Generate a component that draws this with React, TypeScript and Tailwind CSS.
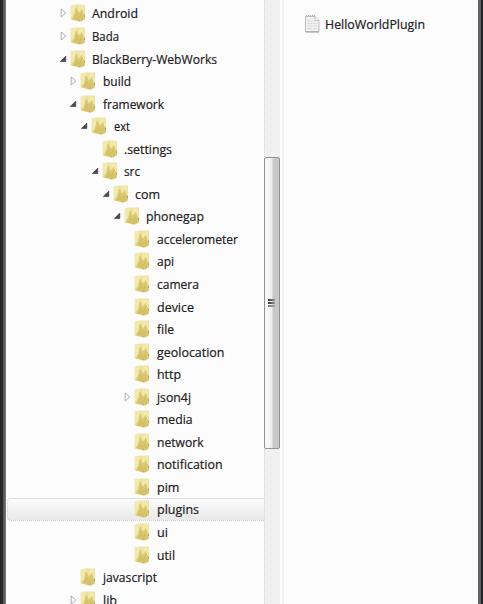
type Node = { name: string; depth: number; state?: "open" | "closed"; width: number };

const nodes: Node[] = [
  { name: "Android", depth: 0, state: "closed", width: 46 },
  { name: "Bada", depth: 0, state: "closed", width: 27 },
  { name: "BlackBerry-WebWorks", depth: 0, state: "open", width: 125 },
  { name: "build", depth: 1, state: "closed", width: 28 },
  { name: "framework", depth: 1, state: "open", width: 61 },
  { name: "ext", depth: 2, state: "open", width: 16 },
  { name: ".settings", depth: 3, width: 48 },
  { name: "src", depth: 3, state: "open", width: 16 },
  { name: "com", depth: 4, state: "open", width: 25 },
  { name: "phonegap", depth: 5, state: "open", width: 58 },
  { name: "accelerometer", depth: 6, width: 81 },
  { name: "api", depth: 6, width: 17 },
  { name: "camera", depth: 6, width: 42 },
  { name: "device", depth: 6, width: 37 },
  { name: "file", depth: 6, width: 17 },
  { name: "geolocation", depth: 6, width: 67.5 },
  { name: "http", depth: 6, width: 24 },
  { name: "json4j", depth: 6, state: "closed", width: 34 },
  { name: "media", depth: 6, width: 35.5 },
  { name: "network", depth: 6, width: 46.5 },
  { name: "notification", depth: 6, width: 65.5 },
  { name: "pim", depth: 6, width: 22.5 },
  { name: "plugins", depth: 6, width: 42 },
  { name: "ui", depth: 6, width: 11 },
  { name: "util", depth: 6, width: 18 },
  { name: "javascript", depth: 1, width: 54 },
  { name: "lib", depth: 1, state: "closed", width: 14 },
];

function Label({ text, width }: { text: string; width: number }) {
  return (
    <svg width={width + 4} height="18" className="shrink-0 overflow-visible">
      <text x="0" y="13.5" textLength={width} lengthAdjust="spacingAndGlyphs" fill="#202022" stroke="#202022" strokeWidth=".2" className="font-['Open_Sans','Noto_Sans',sans-serif] text-[12.5px]">
        {text}
      </text>
    </svg>
  );
}

function Arrow({ state }: { state?: "open" | "closed" }) {
  return (
    <svg width="10" height="12" viewBox="0 0 10 12" className="shrink-0">
      {state === "closed" && <path d="M1.2 2v8L5.8 6z" fill="#fff" stroke="#a2a2a2" strokeWidth=".9" />}
      {state === "open" && <path d="M5.8 3v5.5H.3z" fill="#4a4a4e" stroke="#39393e" strokeWidth=".6" />}
    </svg>
  );
}

function Folder() {
  return (
    <svg width="16" height="18" viewBox="0 0 16 18" className="shrink-0">
      <path d="M.6 1.5 5.5.4h8.7q.9 0 .9 1V15.4l-3.6 2.2-3.2-.1L.6 15.6z" fill="#eee3a2" />
      <path d="M1 2 5.5.8V7L3 12l-2 1z" fill="#f2e9b1" />
      <path d="M9 1.5h5V8l-1 2-2-4-2 1z" fill="#f3e9ad" />
      <path d="m1.5 15.2 2.7-4L5.3 5l1-1.8L8 6.7l1 2L11 6l1-1.5 1.3 4.8 1.5 1.2v4.7l-3.4 2-3.2-.1z" fill="#dac973" />
      <path d="m3.8 14.7 2-4.2.8-2.3L9 13l2.2-4 1.8 6-2 1.8-3-.2z" fill="#d4c169" />
      <path d="M14 11h1v2h-1zM9 16.3h1v1H9z" fill="#aaa27a" />
    </svg>
  );
}

function Row({ node }: { node: Node }) {
  const selected = node.name === "plugins";
  return (
    <li
      className={
        "flex h-[22.55px] items-center " +
        (selected ? "rounded-l-sm border border-r-0 border-dotted border-[#d0d0d0] bg-linear-to-b from-[#fbfbfb] to-[#e9e9e9]" : "border border-transparent")
      }
    >
      <span className="flex items-center" style={{ paddingLeft: 51.7 + node.depth * 10.76 }}>
        <Arrow state={node.state} />
        <Folder />
        <span className="ml-[6.5px] flex items-center"><Label text={node.name} width={node.width} /></span>
      </span>
    </li>
  );
}

function FileIcon() {
  return (
    <svg width="15" height="18" viewBox="0 0 15 18" className="shrink-0">
      <path d="M.5 1.5h9.8l3.7 4v11.2H.5z" fill="#f0f0f0" stroke="#bdbdbd" />
      <path d="M1 .5h9" stroke="#aaa" strokeDasharray="1 1" />
      <path d="M10 1.5v4h4" fill="#fafafa" stroke="#bdbdbd" />
      <path d="M2.5 6h7M2.5 8.5h10M2.5 11h10M2.5 13.5h10" stroke="#d2d2d2" strokeDasharray="2 1" />
      <path d="M1 17h13" stroke="#a0a0a0" />
    </svg>
  );
}

export default function App() {
  return (
    <div className="flex h-[604px] w-[483px] overflow-hidden bg-[#fcfcfc]">
      <div className="w-[3px] shrink-0 bg-[#28282b]" />
      <div className="w-[3px] shrink-0 border-r border-[#77777a] bg-[#5d5d60]" />
      <ul className="w-[258px] shrink-0 overflow-hidden pt-[2.2px] pl-px">
        {nodes.map((node) => <Row key={node.name} node={node} />)}
      </ul>
      <div className="flex w-4 shrink-0 flex-col bg-[#f0f0f0]">
        <div className="h-[157px] shrink-0 border-l border-dotted border-[#d4d4d4]" />
        <div className="flex h-[292px] shrink-0 items-center justify-center rounded-[2px] border border-[#929294] bg-linear-to-r from-[#f7f7f7] from-20% via-[#ececed] via-50% to-[#c8c8cb] to-58% pr-[2px]">
          <span className="flex flex-col gap-px">
            <i className="h-[2px] w-[7px] bg-linear-to-r from-[#333] to-[#999]" />
            <i className="h-[2px] w-[7px] bg-linear-to-r from-[#333] to-[#999]" />
            <i className="h-[2px] w-[7px] bg-linear-to-r from-[#777] to-[#aaa]" />
          </span>
        </div>
        <div className="flex-1 border-l border-dotted border-[#d4d4d4]" />
      </div>
      <div className="ml-[2px] w-[2px] shrink-0 bg-[#f0f0f0]" />
      <main className="flex flex-1 items-start pt-[15px] pl-[21px]">
        <FileIcon />
        <span className="ml-[5px]"><Label text="HelloWorldPlugin" width={100} /></span>
      </main>
      <div className="w-[3px] shrink-0 bg-[#606164]" />
      <div className="w-[2px] shrink-0 bg-[#222326]" />
    </div>
  );
}
